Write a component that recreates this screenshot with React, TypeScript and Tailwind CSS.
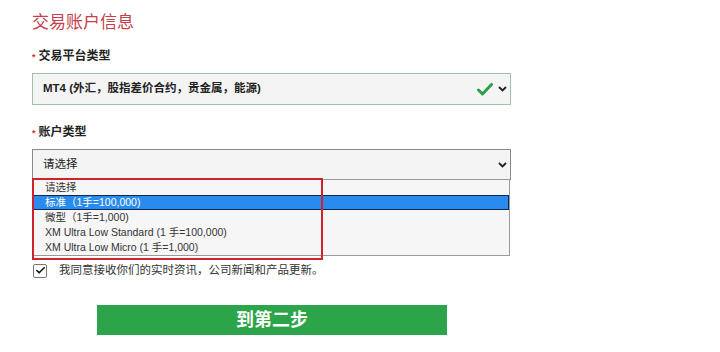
import { Check } from "lucide-react";

const options = [
  "请选择",
  "标准（1手=100,000)",
  "微型（1手=1,000)",
  "XM Ultra Low Standard (1 手=100,000)",
  "XM Ultra Low Micro (1 手=1,000)",
];

function Chevron() {
  return (
    <svg width="9" height="6" viewBox="0 0 9 6" aria-hidden className="shrink-0">
      <path d="M1 1 L4.5 4.5 L8 1" fill="none" stroke="#222" strokeWidth="1.8" />
    </svg>
  );
}

function GreenCheck() {
  return (
    <svg width="16" height="13" viewBox="0 0 16 13" aria-hidden className="shrink-0">
      <path d="M1.5 7 L5.5 11 L14.5 1.5" fill="none" stroke="#2e9e4a" strokeWidth="3" strokeLinecap="round" strokeLinejoin="round" />
    </svg>
  );
}

export default function App() {
  const font = { fontFamily: '"Liberation Sans", "Noto Sans CJK SC", sans-serif' };
  return (
    <div className="relative h-[352px] w-[720px] overflow-hidden bg-white text-[#222]" style={font}>
      <div className="w-[511px] pl-[32px] pt-[10px]">
        <h1 className="text-[17px] leading-[26px] text-[#c4404c]">交易账户信息</h1>

        <p className="mt-[12px] text-[12px] font-bold leading-[16px]">
          <span className="mr-[3px] text-[9px] text-[#d33]">*</span>交易平台类型
        </p>
        <div className="mt-[8px] flex h-[32px] items-center border border-[#9fc1a6] bg-[#f4f4f4] pl-[10px] pr-[3px]">
          <span className="flex-1 text-[11.5px] font-bold">MT4 (外汇，股指差价合约，贵金属，能源)</span>
          <GreenCheck />
          <span className="ml-[5px]">
            <Chevron />
          </span>
        </div>

        <p className="mt-[19px] text-[12px] font-bold leading-[16px]">
          <span className="mr-[3px] text-[9px] text-[#d33]">*</span>账户类型
        </p>
        <div className="relative mt-[8px]">
          <div className="flex h-[31px] items-center border border-[#8a8a8a] bg-[#f4f4f4] pl-[10px] pr-[3px]">
            <span className="flex-1 text-[11.5px]">请选择</span>
            <Chevron />
          </div>
          <ul className="absolute left-0 right-[1px] top-[30px] z-10 border border-[#9a9a9a] bg-[#f6f6f6] text-[10.5px]">
            {options.map((opt, i) =>
              i === 1 ? (
                <li
                  key={opt}
                  className="flex h-[15px] items-center border border-[#0b2a55] bg-[#2a8bee] pl-[11px] text-white"
                >
                  {opt}
                </li>
              ) : (
                <li key={opt} className="flex h-[15px] items-center pl-[12px] text-[#333]">
                  {opt}
                </li>
              )
            )}
          </ul>
          <div className="pointer-events-none absolute left-0 top-[29px] z-20 h-[82px] w-[291px] border-2 border-[#d0212c]" />
        </div>

        <div className="mt-[82px] flex items-center">
          <span className="ml-[1px] grid h-[14px] w-[14px] place-items-center rounded-[2px] border border-[#777] bg-white">
            <Check size={11} strokeWidth={3.5} color="#111" />
          </span>
          <span className="ml-[12px] text-[11.5px] text-[#333]">我同意接收你们的实时资讯，公司新闻和产品更新。</span>
        </div>
      </div>

      <div className="ml-[97px] mt-[26px] flex h-[30px] w-[350px] items-center justify-center bg-[#2ca44a]">
        <span className="text-[18px] font-bold text-white">到第二步</span>
      </div>
    </div>
  );
}
